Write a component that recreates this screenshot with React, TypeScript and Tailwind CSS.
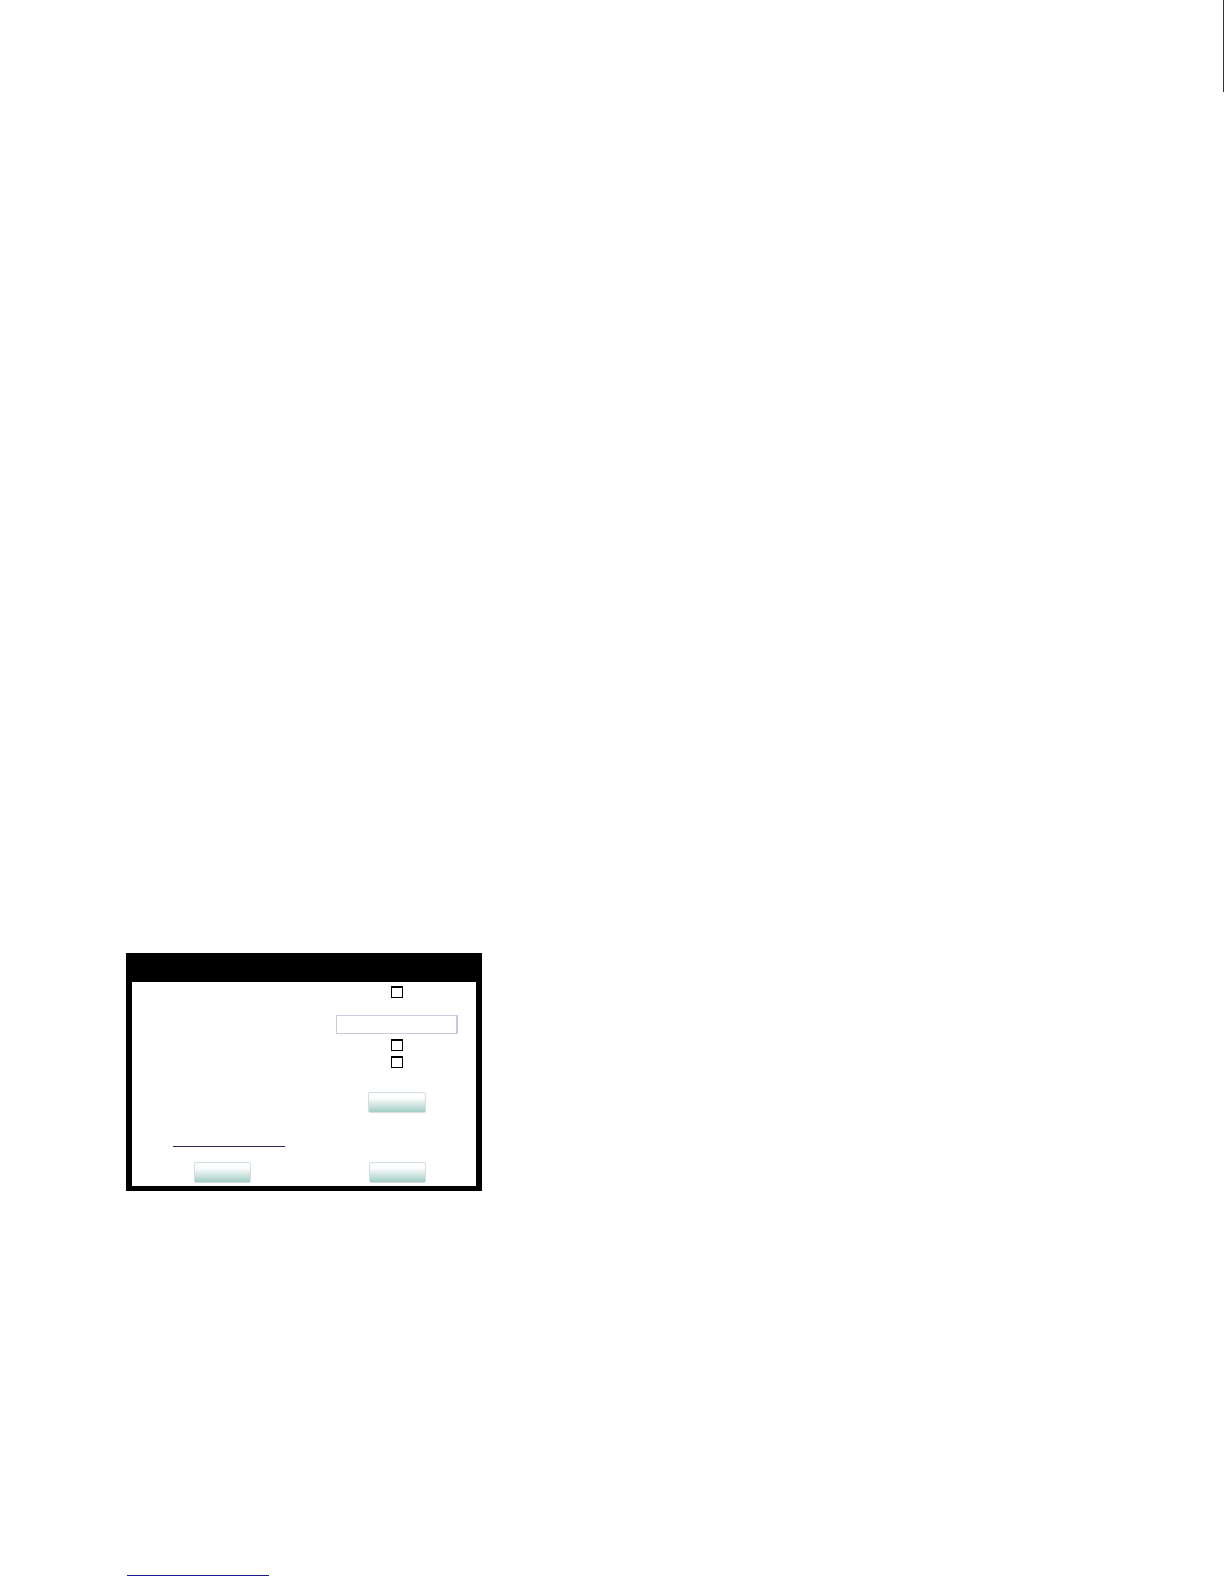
import React from "react";

function Btn({ className = "" }: { className?: string }) {
  return (
    <div
      className={
        "h-[21px] rounded-[2px] border border-[#d5dedd] bg-linear-to-b from-[#fdfefe] from-25% to-[#a2cdc5] " +
        className
      }
    />
  );
}

function Box({ className = "" }: { className?: string }) {
  return (
    <div
      className={
        "h-[12px] w-[12px] border-[1.5px] border-t-2 border-black bg-white " + className
      }
    />
  );
}

export default function App() {
  return (
    <div className="relative min-h-[1584px] w-full bg-white font-['Liberation_Sans',Arial,sans-serif] pt-[953px]">
      <div className="absolute left-[1223px] top-0 h-[92px] w-px bg-[#333333]" />

      <div className="ml-[126px] w-[356px] bg-black pt-[29px] px-[6px] pb-[5px]">
        <div className="flex h-[204px] flex-col bg-white pt-[4px]">
          <Box className="ml-[259px]" />
          <div className="ml-[204px] mt-[17px] h-[19px] w-[122px] border border-r-2 border-[#cacadf] bg-white" />
          <Box className="ml-[259px] mt-[5px]" />
          <Box className="ml-[259px] mt-[5px]" />
          <Btn className="ml-[236px] mt-[24px] w-[58px]" />
          <div className="ml-[41px] mt-[33px] h-px w-[112px] bg-[#2b2560]" />
          <div className="mt-[15px] flex gap-[118px] pl-[62px]">
            <Btn className="w-[57px]" />
            <Btn className="w-[57px]" />
          </div>
        </div>
      </div>

      <div className="ml-[127px] mt-[384px] h-px w-[142px] bg-[#1a1a8c]" />
    </div>
  );
}
